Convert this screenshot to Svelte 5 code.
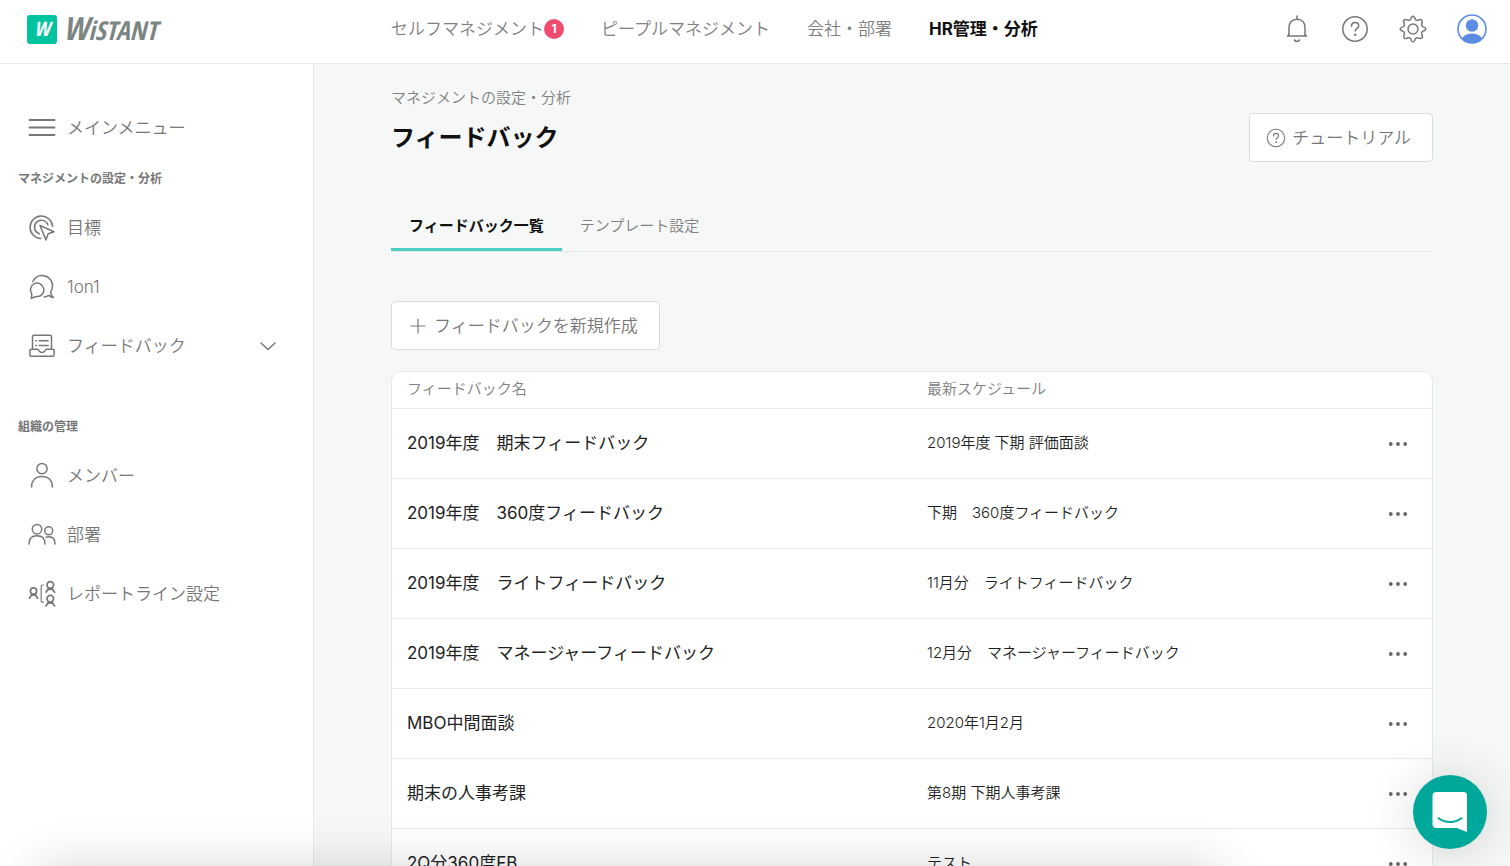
<script>
  const nav = [
    { label: 'セルフマネジメント', badge: 1 },
    { label: 'ピープルマネジメント' },
    { label: '会社・部署' },
    { label: 'HR管理・分析', active: true }
  ];
  const groups = [
    {
      title: 'マネジメントの設定・分析',
      items: [
        { label: '目標', icon: 'target' },
        { label: '1on1', icon: 'chat' },
        { label: 'フィードバック', icon: 'inbox', expandable: true }
      ]
    },
    {
      title: '組織の管理',
      items: [
        { label: 'メンバー', icon: 'member' },
        { label: '部署', icon: 'people' },
        { label: 'レポートライン設定', icon: 'line' }
      ]
    }
  ];
  const rows = [
    ['2019年度　期末フィードバック', '2019年度 下期 評価面談'],
    ['2019年度　360度フィードバック', '下期　360度フィードバック'],
    ['2019年度　ライトフィードバック', '11月分　ライトフィードバック'],
    ['2019年度　マネージャーフィードバック', '12月分　マネージャーフィードバック'],
    ['MBO中間面談', '2020年1月2月'],
    ['期末の人事考課', '第8期 下期人事考課'],
    ['2Q分360度FB', 'テスト']
  ];
</script>

{#snippet icon(name)}
  <svg class="icon" width="28" height="28" viewBox="0 0 28 28" aria-hidden="true">
    {#if name === 'menu'}
      <path d="M1.500 6h25M1.500 13.500h25M1.500 21h25" stroke-width="1.800" />
    {:else if name === 'target'}
      <path d="M12.800 24.600A11.300 11.300 0 1 1 24.600 12.200" />
      <path d="M11.300 19.700A6.900 6.900 0 1 1 19.900 10.800" />
      <path d="M12 11.500l14 6.300-5.800 1.900-2.300 6.200z" />
    {:else if name === 'chat'}
      <path d="M4.800 8.800C6.500 4.700 10 2.500 13.800 2.500c6.200 0 10.700 4.600 10.700 10.200 0 3-.9 5-2 6.600.4 2 1.500 3.700 3 5.200-2-.1-3.300-1.300-4.700-2.100-1.500.9-3 1.500-4.700 1.500" />
      <path d="M3.300 25.300c.4-1.500.5-3 .4-4.600A6.700 6.700 0 1 1 9.300 23.500c-1.800.1-4 .8-6 1.800z" />
    {:else if name === 'inbox'}
      <path d="M4.500 16.500V4.800c0-1 .6-1.600 1.600-1.600h15.800c1 0 1.600.6 1.600 1.600v11.700" />
      <path d="M3.200 17.200h6.300c.8 0 1 .5 1.300 1.300.5 1.300 1.300 1.900 3.200 1.900s2.700-.6 3.200-1.900c.3-.8.5-1.300 1.300-1.300h6.300c.8 0 1.300.5 1.300 1.300v4.500c0 .8-.5 1.300-1.300 1.300H3.200c-.8 0-1.300-.5-1.300-1.300v-4.500c0-.8.5-1.300 1.300-1.300z" />
      <path d="M7.700 8.700h.6M11.200 8.700h9M7.700 13.500h.6M11.200 13.500h9" />
    {:else if name === 'member'}
      <circle cx="14" cy="6.700" r="5.100" />
      <path d="M3.600 25c0-6.700 4-10.500 10.400-10.500s10.400 3.800 10.400 10.500" />
    {:else if name === 'people'}
      <circle cx="9" cy="8.200" r="4.700" />
      <path d="M1 23c0-5.400 3-8.200 8-8.200s8 2.800 8 8.200" />
      <circle cx="20.700" cy="9.800" r="4" />
      <path d="M18.300 16.200c.8-.3 1.600-.4 2.500-.4 4 0 6.300 2.600 6.300 7.200" />
    {:else}
      <g stroke-width="1.700">
        <circle cx="5.500" cy="11" r="3.100" />
        <path d="M1.500 18.200l2.400-3.900M9.500 18.200l-2.400-3.900M3.400 15.500c1.400-.7 2.800-.7 4.200 0" />
        <circle cx="22.300" cy="5" r="3.300" />
        <path d="M18 12.200l2.500-3.700M26.600 12.200l-2.500-3.700M19.800 9.800c1.700-.8 3.300-.8 5 0" />
        <circle cx="22.300" cy="18.700" r="3.300" />
        <path d="M18 25.900l2.500-3.700M26.600 25.900l-2.500-3.700M19.800 23.500c1.700-.8 3.300-.8 5 0" />
      </g>
      <path d="M15.500 5h-1c-.8 0-1.300.5-1.300 1.300v14.500c0 .8.5 1.300 1.300 1.300h1" stroke-width="1.200" />
    {/if}
  </svg>
{/snippet}

{#snippet question(size)}
  <svg class="icon" width={size} height={size} viewBox="0 0 28 28" aria-hidden="true">
    <circle cx="14" cy="14" r="12.200" />
    <path d="M10.500 11.200c0-2.200 1.400-3.700 3.600-3.700s3.600 1.300 3.600 3.300c0 2.700-3.500 2.900-3.500 5.200" />
    <circle cx="14.200" cy="19.800" r=".5" />
  </svg>
{/snippet}

<div class="app">
  <header>
    <a class="logo" href="#top" aria-label="WiSTANT">
      <span class="mark">W</span>
      <span class="wordmark"><span class="initial">W</span>iSTANT</span>
    </a>
    <nav class="global">
      {#each nav as item}
        <a href="#nav" class:active={item.active}>{item.label}{#if item.badge}<span class="badge">{item.badge}</span>{/if}</a>
      {/each}
    </nav>
    <div class="tools">
      <button aria-label="通知">
        <svg class="icon" width="28" height="28" viewBox="0 0 28 28">
          <path d="M14 1v3M6 21V12.500C6 7.500 9 4.200 14 4.200s8 3.300 8 8.300V21M4.500 21h19M4.500 21c1-.8 1.400-1.600 1.500-3M23.500 21c-1-.8-1.400-1.600-1.500-3" />
          <path d="M11.500 25c.6 1 1.400 1.500 2.500 1.500s1.900-.5 2.500-1.500" />
        </svg>
      </button>
      <button aria-label="ヘルプ">{@render question(28)}</button>
      <button aria-label="設定">
        <svg class="icon" width="28" height="28" viewBox="0 0 28 28">
          <path d="M11.600 4.400Q12.600 1.200 14 1.200T16.400 4.400Q17.600 5.700 19.100 5.200Q21.800 3.700 22.900 5.100T22.600 8.900Q22.200 10.600 23.600 11.600Q26.800 12.600 26.800 14T23.600 16.400Q22.200 17.400 22.600 19.100Q24.300 21.800 22.900 22.900T19.100 22.800Q17.600 22.300 16.400 23.600Q15.400 26.800 14 26.800T11.600 23.600Q10.400 22.300 8.900 22.800Q6.200 24.300 5.100 22.900T5.400 19.100Q5.800 17.400 4.400 16.400Q1.200 15.400 1.200 14T4.400 11.600Q5.800 10.600 5.400 8.900Q3.700 6.200 5.100 5.100T8.900 5.200Q10.400 5.700 11.600 4.400z" />
          <circle cx="14" cy="14" r="5" />
        </svg>
      </button>
      <button aria-label="アカウント">
        <svg width="30" height="30" viewBox="0 0 30 30">
          <clipPath id="avatar"><circle cx="15" cy="15" r="14" /></clipPath>
          <circle cx="15" cy="15" r="14" fill="#fff" />
          <g clip-path="url(#avatar)" fill="#5b8ee2">
            <circle cx="15" cy="11.500" r="6.200" />
            <ellipse cx="15" cy="27.500" rx="11" ry="8" />
          </g>
          <circle cx="15" cy="15" r="14" fill="none" stroke="#5b8ee2" stroke-width="1.600" />
        </svg>
      </button>
    </div>
  </header>

  <div class="body">
    <aside>
      <a class="item" href="#menu">{@render icon('menu')}<span>メインメニュー</span></a>
      {#each groups as group}
        <section>
          <h2>{group.title}</h2>
          {#each group.items as item}
            <a class="item" href="#item">
              {@render icon(item.icon)}
              <span>{item.label}</span>
              {#if item.expandable}
                <svg class="icon chevron" width="16" height="16" viewBox="0 0 16 16" aria-hidden="true"><path d="M1 5l7 6.500L15 5" /></svg>
              {/if}
            </a>
          {/each}
        </section>
      {/each}
    </aside>

    <main>
      <div class="heading">
        <div>
          <p class="crumb">マネジメントの設定・分析</p>
          <h1>フィードバック</h1>
        </div>
        <button class="box tutorial">{@render question(20)}チュートリアル</button>
      </div>

      <div class="tabs">
        <a class="tab active" href="#list">フィードバック一覧</a>
        <a class="tab" href="#template">テンプレート設定</a>
      </div>

      <button class="box create">
        <svg class="icon" width="16" height="16" viewBox="0 0 16 16" aria-hidden="true"><path d="M8 1v14M1 8h14" stroke-width="1.200" /></svg>
        フィードバックを新規作成
      </button>

      <div class="card">
        <table>
          <colgroup>
            <col class="half" />
            <col />
            <col class="menu" />
          </colgroup>
          <thead>
            <tr><th>フィードバック名</th><th colspan="2">最新スケジュール</th></tr>
          </thead>
          <tbody>
            {#each rows as [name, schedule]}
              <tr>
                <td class="name">{name}</td>
                <td>{schedule}</td>
                <td class="actions">
                  <button aria-label="メニュー">
                    <svg width="20" height="6" viewBox="0 0 20 6" fill="#666"><circle cx="2.800" cy="3" r="1.900" /><circle cx="10" cy="3" r="1.900" /><circle cx="17.200" cy="3" r="1.900" /></svg>
                  </button>
                </td>
              </tr>
            {/each}
          </tbody>
        </table>
      </div>
    </main>
  </div>

  <div class="shade"></div>
  <button class="messenger" aria-label="チャット">
    <svg width="38" height="42" viewBox="0 0 38 42" aria-hidden="true">
      <path d="M5.500 1h27A3.500 3.500 0 0 1 36 4.500V41l-10-4H5.500A4 4 0 0 1 1.500 33V5a4 4 0 0 1 4-4z" fill="#fff" />
      <path d="M7.500 27.200c7 5 16 5 23 0" fill="none" stroke="#00a89c" stroke-width="2" stroke-linecap="round" />
    </svg>
  </button>
</div>

<style>
  :global(body) {
    margin: 0;
  }
  .app {
    display: flex;
    flex-direction: column;
    height: 100vh;
    overflow: hidden;
    color: #222;
    background: #f6f8f8;
    font-family: Inter, 'Noto Sans CJK JP', sans-serif;
    font-size: 17px;
    line-height: 24px;
  }
  a {
    color: inherit;
    text-decoration: none;
  }
  button {
    padding: 0;
    border: 0;
    background: none;
    color: inherit;
    font: inherit;
    cursor: pointer;
  }
  h1,
  h2,
  p {
    margin: 0;
  }
  svg {
    display: block;
    flex: none;
  }
  .icon {
    fill: none;
    stroke: #777;
    stroke-width: 1.5;
    stroke-linecap: round;
    stroke-linejoin: round;
  }

  header {
    display: flex;
    flex: none;
    align-items: flex-start;
    height: 63px;
    border-bottom: 1px solid #e6e9e9;
    background: #fff;
  }
  .logo {
    display: flex;
    flex: none;
    align-items: center;
    gap: 6px;
    box-sizing: border-box;
    width: 391px;
    height: 58px;
    padding-left: 27px;
    font-family: 'Open Sans Condensed', 'Roboto Condensed', Lato, sans-serif;
    font-style: italic;
    font-weight: 900;
  }
  .mark {
    display: flex;
    align-items: center;
    justify-content: center;
    width: 30px;
    height: 29px;
    border-radius: 3px;
    background: #00c3a0;
    color: #fff;
    font-size: 20px;
    line-height: 24px;
  }
  .wordmark {
    color: #7b8583;
    font-size: 26px;
    line-height: 30px;
  }
  .initial {
    font-size: 32px;
  }
  .global {
    display: flex;
    flex: 1;
    gap: 37px;
    height: 58px;
    align-items: center;
    color: #808080;
    font-weight: 350;
    white-space: nowrap;
  }
  .global a {
    display: flex;
    align-items: center;
  }
  .global .active {
    color: #111;
    font-weight: 700;
  }
  .badge {
    width: 20px;
    height: 20px;
    border-radius: 50%;
    background: #ef4b6f;
    color: #fff;
    font-size: 12px;
    font-weight: 700;
    line-height: 20px;
    text-align: center;
  }
  .tools {
    display: flex;
    align-items: center;
    gap: 30px;
    height: 58px;
    padding-right: 23px;
  }

  .body {
    display: flex;
    flex: 1;
    min-height: 0;
  }
  aside {
    flex: none;
    box-sizing: border-box;
    width: 314px;
    padding-top: 34px;
    border-right: 1px solid #e6e9e9;
    background: #fff;
    color: #777;
    font-weight: 350;
  }
  .item {
    display: flex;
    align-items: center;
    gap: 11px;
    height: 59px;
    padding: 0 37px 0 28px;
  }
  .chevron {
    margin-left: auto;
  }
  section + section {
    margin-top: 30px;
  }
  h2 {
    padding: 3px 0 0 18px;
    color: #777;
    font-size: 12px;
    font-weight: 700;
    line-height: 38px;
  }

  main {
    flex: 1;
    min-width: 0;
    padding: 22px 77px 0;
  }
  .heading {
    display: flex;
    align-items: flex-end;
    justify-content: space-between;
  }
  .crumb {
    color: #808080;
    font-size: 15px;
    font-weight: 350;
  }
  h1 {
    padding: 10px 0 6px;
    color: #111;
    font-size: 24px;
    font-weight: 700;
    line-height: 36px;
  }
  .box {
    display: flex;
    align-items: center;
    box-sizing: border-box;
    height: 49px;
    border: 1px solid #d9dcdc;
    border-radius: 4px;
    background: #fff;
    color: #777;
    font-weight: 350;
  }
  .tutorial {
    gap: 6px;
    padding: 0 21px 0 16px;
  }
  .tabs {
    display: flex;
    margin-top: 38px;
    border-bottom: 1px solid #e6e9e9;
  }
  .tab {
    padding: 14px 18px 10px;
    border-bottom: 3px solid transparent;
    color: #808080;
    font-size: 15px;
    font-weight: 350;
  }
  .tab.active {
    border-color: #4dcdc0;
    color: #111;
    font-weight: 700;
  }
  .create {
    gap: 8px;
    margin: 49px 0 21px;
    padding: 0 21px 0 18px;
  }
  .card {
    overflow: hidden;
    border: 1px solid #e6e9e9;
    border-radius: 10px;
    background: #fff;
  }
  table {
    width: 100%;
    border-collapse: collapse;
    table-layout: fixed;
  }
  .half {
    width: 50%;
  }
  .menu {
    width: 80px;
  }
  th,
  td {
    padding: 0 15px 2px;
    text-align: left;
    font-size: 15px;
    font-weight: 350;
    white-space: nowrap;
  }
  th {
    height: 34px;
    color: #808080;
  }
  td {
    height: 67px;
    border-top: 1px solid #e6e9e9;
  }
  td.name {
    font-size: 17px;
    font-weight: 400;
  }
  td.actions {
    padding: 0 24px 0 0;
  }
  .actions button {
    display: block;
    margin-left: auto;
    padding: 10px 0;
  }

  .shade {
    position: fixed;
    top: 100%;
    left: 40px;
    right: 290px;
    height: 60px;
    box-shadow: 0 0 50px rgba(0, 0, 0, 0.16);
    pointer-events: none;
  }
  .messenger {
    position: fixed;
    right: 23px;
    bottom: 17px;
    display: flex;
    align-items: center;
    justify-content: center;
    width: 74px;
    height: 74px;
    border-radius: 50%;
    background: #00a89c;
    box-shadow: 0 2px 48px rgba(0, 0, 0, 0.16);
  }
</style>
